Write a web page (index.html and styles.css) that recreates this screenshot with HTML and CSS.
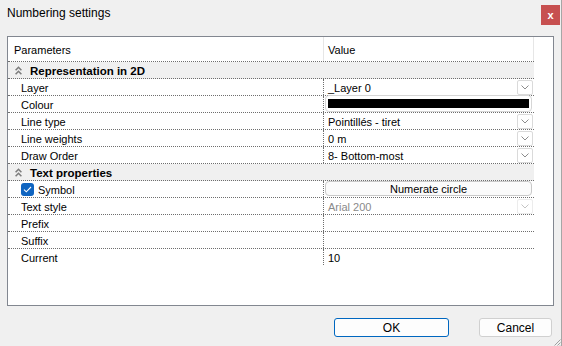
FILE: index.html
```html
<!DOCTYPE html>
<html>
<head>
<meta charset="utf-8">
<link rel="stylesheet" href="styles.css">
</head>
<body>
<div class="window">
  <div class="titlebar">
    <span class="title">Numbering settings</span>
    <button class="close">x</button>
  </div>
  <div class="panel">
    <div class="grid">
      <div class="head">
        <div class="hname">Parameters</div>
        <div class="hval">Value</div>
      </div>

      <div class="group">
        <svg class="collapse" width="7" height="9" viewBox="0 0 7 9"><path d="M0.6 4.2 L3.5 1.3 L6.4 4.2 M0.6 8.2 L3.5 5.3 L6.4 8.2" fill="none" stroke="#7d7d7d" stroke-width="1.6"/></svg>
        <span class="t">Representation in 2D</span>
      </div>
      <div class="row">
        <div class="name">Layer</div>
        <div class="val"><span class="t">_Layer 0</span><span class="dd"><svg width="8" height="5" viewBox="0 0 8 5"><path d="M0.5 0.5 L4 4 L7.5 0.5" fill="none" stroke="#8c8c8c" stroke-width="1"/></svg></span></div>
      </div>
      <div class="row">
        <div class="name">Colour</div>
        <div class="val"><span class="colourbox"><span class="swatch"></span></span></div>
      </div>
      <div class="row">
        <div class="name">Line type</div>
        <div class="val"><span class="t">Pointillés - tiret</span><span class="dd"><svg width="8" height="5" viewBox="0 0 8 5"><path d="M0.5 0.5 L4 4 L7.5 0.5" fill="none" stroke="#8c8c8c" stroke-width="1"/></svg></span></div>
      </div>
      <div class="row">
        <div class="name">Line weights</div>
        <div class="val"><span class="t">0 m</span><span class="dd"><svg width="8" height="5" viewBox="0 0 8 5"><path d="M0.5 0.5 L4 4 L7.5 0.5" fill="none" stroke="#8c8c8c" stroke-width="1"/></svg></span></div>
      </div>
      <div class="row">
        <div class="name">Draw Order</div>
        <div class="val"><span class="t">8- Bottom-most</span><span class="dd"><svg width="8" height="5" viewBox="0 0 8 5"><path d="M0.5 0.5 L4 4 L7.5 0.5" fill="none" stroke="#8c8c8c" stroke-width="1"/></svg></span></div>
      </div>

      <div class="group">
        <svg class="collapse" width="7" height="9" viewBox="0 0 7 9"><path d="M0.6 4.2 L3.5 1.3 L6.4 4.2 M0.6 8.2 L3.5 5.3 L6.4 8.2" fill="none" stroke="#7d7d7d" stroke-width="1.6"/></svg>
        <span class="t">Text properties</span>
      </div>
      <div class="row">
        <div class="name check"><span class="cb"><svg width="9" height="7" viewBox="0 0 9 7"><path d="M1 3.6 L3.3 5.8 L8 1" fill="none" stroke="#fff" stroke-width="1.1"/></svg></span>Symbol</div>
        <div class="val top"><span class="btnval">Numerate circle</span></div>
      </div>
      <div class="row">
        <div class="name">Text style</div>
        <div class="val"><span class="t disabled">Arial 200</span><span class="dd off"><svg width="8" height="5" viewBox="0 0 8 5"><path d="M0.5 0.5 L4 4 L7.5 0.5" fill="none" stroke="#c4c4c4" stroke-width="1"/></svg></span></div>
      </div>
      <div class="row">
        <div class="name">Prefix</div>
        <div class="val"></div>
      </div>
      <div class="row">
        <div class="name">Suffix</div>
        <div class="val"></div>
      </div>
      <div class="row last">
        <div class="name">Current</div>
        <div class="val"><span class="t">10</span></div>
      </div>
    </div>
  </div>
  <div class="footer">
    <button class="btn ok">OK</button>
    <button class="btn">Cancel</button>
  </div>
  <svg class="grip" width="8" height="8" viewBox="0 0 8 8"><path d="M7.5 1.5 L1.5 7.5 M7.5 4.5 L4.5 7.5 M7.5 7 L7 7.5" stroke="#a0a0a0" stroke-width="1" fill="none"/></svg>
</div>
</body>
</html>
```

FILE: styles.css
```css
html, body {
  margin: 0;
  padding: 0;
}
body {
  background: #f0f0f0;
  font-family: "Liberation Sans", Arial, sans-serif;
  color: #000;
}
.window {
  position: relative;
  width: 561px;
  height: 346px;
  border-right: 1px solid #a6a6a6;
  display: flex;
  flex-direction: column;
  overflow: hidden;
}
.titlebar {
  height: 36px;
  display: flex;
  align-items: flex-start;
  justify-content: space-between;
  flex: none;
}
.title {
  font-size: 12px;
  line-height: 16px;
  margin: 5px 0 0 7px;
}
.close {
  width: 19px;
  height: 20px;
  margin: 5px 1px 0 0;
  padding: 0;
  border: 0;
  background: #c75050;
  color: #fff;
  font-family: "Liberation Sans", Arial, sans-serif;
  font-weight: bold;
  font-size: 11px;
  line-height: 18px;
}
.panel {
  flex: none;
  margin-left: 7px;
  width: 545px;
  height: 268px;
  border: 1px solid #828790;
  background: #fff;
}
.grid {
  width: 526px;
  font-size: 11px;
}
.head {
  display: flex;
  height: 24px;
  border-bottom: 1px dotted #6e6e6e;
}
.hname {
  width: 309px;
  padding-left: 6px;
  border-right: 1px solid #e6e6e6;
  line-height: 26px;
}
.hval {
  width: 205px;
  padding-left: 4px;
  border-right: 1px solid #e6e6e6;
  line-height: 26px;
}
.group {
  display: flex;
  align-items: center;
  height: 16px;
  background: #f0f0f0;
  border-bottom: 1px dotted #6e6e6e;
  padding-left: 7px;
  font-weight: bold;
  font-size: 11.5px;
}
.collapse {
  margin-right: 8px;
  flex: none;
}
.t {
  line-height: 16px;
  padding-top: 2px;
}
.row {
  display: grid;
  grid-template-columns: 316px 210px;
  grid-template-rows: 16px;
  height: 16px;
  border-bottom: 1px dotted #6e6e6e;
}
.row.last {
  border-bottom: 0;
}
.name {
  border-right: 1px dotted #6e6e6e;
  padding-left: 13px;
  padding-top: 2px;
  line-height: 16px;
  display: flex;
  align-items: center;
  overflow: visible;
}
.val {
  display: flex;
  align-items: center;
  padding-left: 4px;
  line-height: 16px;
}
.val.top {
  align-items: flex-start;
  padding-left: 1px;
}
.dd {
  margin-left: auto;
  margin-right: 1px;
  align-self: flex-end;
  width: 14px;
  height: 13px;
  border: 1px solid #dadada;
  border-radius: 2px;
  background: #fff;
  display: flex;
  align-items: center;
  justify-content: center;
  box-sizing: content-box;
}
.dd.off {
  border-color: #ececec;
}
.disabled {
  color: #8a8a8a;
}
.colourbox {
  margin-left: -3px;
  margin-top: -1px;
  width: 201px;
  height: 9px;
  padding: 3px 2px;
  border: 1px solid #d6d6d6;
  border-radius: 4px;
  display: flex;
}
.swatch {
  flex: 1;
  background: #000;
}
.btnval {
  width: 205px;
  height: 13px;
  border: 1px solid #c9c9c9;
  border-radius: 4px;
  background: #fbfbfb;
  text-align: center;
  line-height: 14px;
  font-size: 11px;
}
.check {
  padding-left: 13px;
}
.cb {
  width: 13px;
  height: 13px;
  border-radius: 3px;
  background: #0f64c0;
  margin-right: 4px;
  margin-top: -2px;
  display: flex;
  align-items: center;
  justify-content: center;
}
.footer {
  flex: none;
  display: flex;
  justify-content: flex-end;
  gap: 30px;
  margin-top: 12px;
  padding-right: 9px;
}
.btn {
  height: 19px;
  width: 73px;
  padding: 0;
  border: 1px solid #d0d0d0;
  border-radius: 3px;
  background: #fdfdfd;
  font-family: "Liberation Sans", Arial, sans-serif;
  font-size: 12px;
  color: #000;
}
.btn.ok {
  width: 115px;
  border-color: #0067c0;
}
.grip {
  position: absolute;
  right: 0;
  bottom: 0;
}
```
